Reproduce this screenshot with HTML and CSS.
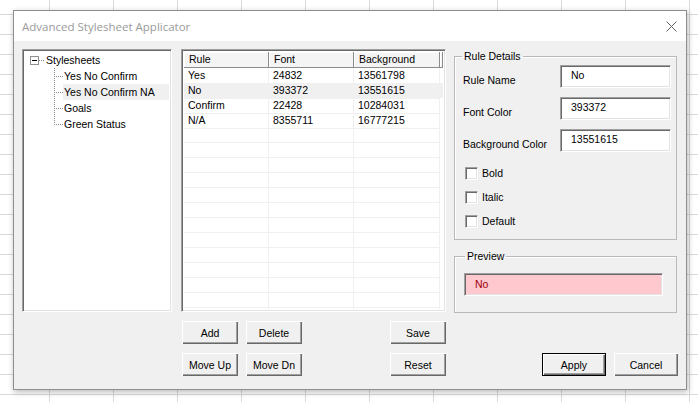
FILE: index.html
```html
<!DOCTYPE html>
<html>
<head>
<meta charset="utf-8">
<link rel="stylesheet" href="styles.css">
</head>
<body>
<div class="dialog">
  <div class="titlebar">
    <span class="title">Advanced Stylesheet Applicator</span>
    <svg class="close" width="11" height="11" viewBox="0 0 11 11"><path d="M0.5 0.5 L10.5 10.5 M10.5 0.5 L0.5 10.5" stroke="#5f5f5f" stroke-width="1" fill="none"/></svg>
  </div>
  <div class="body">
    <div class="tree sunken">
      <div class="node root"><span class="minus"><span class="bar"></span></span><span class="dots"></span><span class="txt">Stylesheets</span></div>
      <div class="node kid"><span class="txt">Yes No Confirm</span></div>
      <div class="node kid"><span class="txt sel">Yes No Confirm NA</span></div>
      <div class="node kid"><span class="txt">Goals</span></div>
      <div class="node kid last"><span class="txt">Green Status</span></div>
    </div>

    <div class="list sunken">
      <div class="lv-head">
        <div class="hc">Rule</div><div class="hc">Font</div><div class="hc">Background</div><div class="hc fill"></div>
      </div>
      <div class="lv-row"><div class="c">Yes</div><div class="c">24832</div><div class="c">13561798</div></div>
      <div class="lv-row hl"><div class="c">No</div><div class="c">393372</div><div class="c">13551615</div></div>
      <div class="lv-row"><div class="c">Confirm</div><div class="c">22428</div><div class="c">10284031</div></div>
      <div class="lv-row"><div class="c">N/A</div><div class="c">8355711</div><div class="c">16777215</div></div>
      <div class="lv-row"><div class="c"></div><div class="c"></div><div class="c"></div></div>
      <div class="lv-row"><div class="c"></div><div class="c"></div><div class="c"></div></div>
      <div class="lv-row"><div class="c"></div><div class="c"></div><div class="c"></div></div>
      <div class="lv-row"><div class="c"></div><div class="c"></div><div class="c"></div></div>
      <div class="lv-row"><div class="c"></div><div class="c"></div><div class="c"></div></div>
      <div class="lv-row"><div class="c"></div><div class="c"></div><div class="c"></div></div>
      <div class="lv-row"><div class="c"></div><div class="c"></div><div class="c"></div></div>
      <div class="lv-row"><div class="c"></div><div class="c"></div><div class="c"></div></div>
      <div class="lv-row"><div class="c"></div><div class="c"></div><div class="c"></div></div>
      <div class="lv-row"><div class="c"></div><div class="c"></div><div class="c"></div></div>
      <div class="lv-row"><div class="c"></div><div class="c"></div><div class="c"></div></div>
      <div class="lv-row"><div class="c"></div><div class="c"></div><div class="c"></div></div>
      <div class="lv-row"><div class="c"></div><div class="c"></div><div class="c"></div></div>
    </div>

    <div class="right">
      <fieldset class="group details">
        <legend class="legend-details">Rule Details</legend>
        <div class="details-inner">
          <div class="frow"><span class="flabel">Rule Name</span><div class="tbox sunken">No</div></div>
          <div class="frow"><span class="flabel">Font Color</span><div class="tbox sunken">393372</div></div>
          <div class="frow"><span class="flabel">Background Color</span><div class="tbox sunken">13551615</div></div>
          <div class="checks">
            <div class="crow"><span class="cbox sunken"></span><span>Bold</span></div>
            <div class="crow"><span class="cbox sunken"></span><span>Italic</span></div>
            <div class="crow"><span class="cbox sunken"></span><span>Default</span></div>
          </div>
        </div>
      </fieldset>
      <fieldset class="group preview">
        <legend class="legend-preview">Preview</legend>
        <div class="preview-inner">
          <div class="pbox sunken">No</div>
        </div>
      </fieldset>
    </div>

    <div class="spacer"></div>
    <div class="buttons">
      <div class="btn">Add</div>
      <div class="btn">Delete</div>
      <div class="gapcell"></div>
      <div class="btn">Save</div>
      <div class="btn">Move Up</div>
      <div class="btn">Move Dn</div>
      <div class="gapcell"></div>
      <div class="btn">Reset</div>
    </div>
    <div class="dlgbtns">
      <div class="btn wide default">Apply</div>
      <div class="btn wide">Cancel</div>
    </div>
  </div>
</div>
</body>
</html>
```

FILE: styles.css
```css
html, body {
  margin: 0;
  padding: 0;
}
body {
  width: 698px;
  height: 402px;
  overflow: hidden;
  box-sizing: border-box;
  padding: 10px 0 0 13px;
  background-color: #ffffff;
  background-image:
    linear-gradient(to right, #d9d9d9 0 1px, transparent 1px),
    linear-gradient(to bottom, #d9d9d9 0 1px, transparent 1px);
  background-size: 64px 20px;
  background-position: 49px 14px;
  font-family: "Liberation Sans", Arial, sans-serif;
  font-size: 10.5px;
  color: #000;
}

.dialog {
  width: 674px;
  height: 380px;
  box-sizing: border-box;
  border: 1px solid #8f8f8f;
  background: #f0f0f0;
  box-shadow: 1px 2px 6px rgba(0, 0, 0, 0.28);
  display: flex;
  flex-direction: column;
}

.titlebar {
  height: 30px;
  background: #ffffff;
  display: flex;
  align-items: center;
  justify-content: space-between;
  padding: 0 9px 0 8px;
  flex: none;
}
.title {
  font-family: "Open Sans", "Noto Sans", sans-serif;
  font-size: 11.5px;
  color: #9a9a9a;
}
.close {
  display: block;
}

.body {
  display: grid;
  grid-template-columns: 150px 266px 223px;
  grid-template-rows: 264px auto;
  column-gap: 8px;
  padding: 8px 0 0 8px;
}

.sunken {
  box-sizing: border-box;
  border: 1px solid;
  border-color: #a0a0a0 #ffffff #ffffff #a0a0a0;
  box-shadow: inset 1px 1px #696969, inset -1px -1px #e3e3e3;
  background: #ffffff;
}

/* tree */
.tree {
  height: 263px;
  padding: 2px 2px 0 2px;
  overflow: hidden;
}
.node {
  height: 16px;
  display: flex;
  align-items: center;
  line-height: 16px;
}
.root {
  padding-left: 5px;
}
.minus {
  width: 9px;
  height: 9px;
  box-sizing: border-box;
  border: 1px solid #919191;
  background: #fff;
  display: flex;
  align-items: center;
  justify-content: center;
  flex: none;
}
.minus .bar {
  width: 5px;
  height: 1px;
  background: #000;
}
.dots {
  width: 6px;
  height: 1px;
  background: repeating-linear-gradient(to right, #8a8a8a 0 1px, transparent 1px 2px);
  flex: none;
}
.root .txt {
  padding-left: 1px;
}
.kid {
  padding-left: 38px;
  background:
    repeating-linear-gradient(to bottom, #8a8a8a 0 1px, transparent 1px 2px) 29px 0 / 1px 100% no-repeat,
    repeating-linear-gradient(to right, #8a8a8a 0 1px, transparent 1px 2px) 31px 8px / 8px 1px no-repeat;
}
.kid.last {
  background-size: 1px 9px, 8px 1px;
}
.kid .txt {
  flex: 1;
  padding-left: 1px;
  white-space: nowrap;
}
.kid .txt.sel {
  background: #f0f0f0;
}

/* list view */
.list {
  height: 263px;
  margin-left: 1px;
  padding: 2px 2px 0 2px;
  overflow: hidden;
}
.lv-head {
  display: grid;
  grid-template-columns: 85px 85px 86px 1fr;
  height: 16px;
}
.hc {
  box-sizing: border-box;
  background: #f4f4f4;
  border-right: 1px solid #8c8c8c;
  border-bottom: 1px solid #8c8c8c;
  box-shadow: inset 1px 1px #ffffff;
  padding-left: 5px;
  line-height: 15px;
  white-space: nowrap;
}
.hc.fill {
  padding: 0;
}
.lv-row {
  display: grid;
  grid-template-columns: 85px 85px 86px;
  height: 15px;
}
.lv-row.hl {
  background: #f0f0f0;
}
.c {
  box-sizing: border-box;
  border-right: 1px solid #f0f0f0;
  border-bottom: 1px solid #f0f0f0;
  padding-left: 4px;
  line-height: 15px;
  white-space: nowrap;
}

/* right panel */
.right {
  display: flex;
  flex-direction: column;
}
.group {
  margin: 0;
  padding: 0;
  min-width: 0;
  border: 1px solid #b9b9b9;
  box-shadow: 1px 1px 0 #ffffff inset;
  box-sizing: border-box;
}
.group legend {
  padding: 0 2px;
  line-height: 13px;
  height: 13px;
}
.details {
  margin-top: 1px;
}
.legend-details {
  margin-left: 7px;
}
.legend-preview {
  margin-left: 10px;
}
.details-inner {
  padding: 2px 5px 11px 8px;
}
.frow {
  display: flex;
  height: 23px;
  margin-bottom: 9px;
}
.flabel {
  width: 97px;
  padding-top: 9px;
  line-height: 13px;
  white-space: nowrap;
}
.tbox {
  width: 111px;
  height: 23px;
  padding: 3px 0 0 10px;
  line-height: 13px;
}
.checks {
  padding-top: 6px;
  display: flex;
  flex-direction: column;
  gap: 11px;
  padding-left: 2px;
}
.crow {
  display: flex;
  align-items: center;
  height: 13px;
  line-height: 13px;
}
.cbox {
  width: 13px;
  height: 13px;
  margin-right: 4px;
  flex: none;
}
.preview {
  margin-top: 10px;
}
.preview-inner {
  padding: 10px 0 16px 9px;
}
.pbox {
  width: 199px;
  height: 23px;
  background: #ffc7ce;
  color: #9c0006;
  padding: 0 0 0 10px;
  line-height: 20px;
}

/* buttons */
.spacer {
  grid-column: 1;
}
.buttons {
  grid-column: 2;
  margin-top: 8px;
  margin-left: 2px;
  display: grid;
  grid-template-columns: 56px 56px 1fr 56px;
  grid-template-rows: 23px 23px;
  column-gap: 8px;
  row-gap: 9px;
}
.btn {
  box-sizing: border-box;
  height: 23px;
  background: #f0f0f0;
  box-shadow: inset 1px 1px #ffffff, inset -1px -1px #696969, inset -2px -2px #a0a0a0;
  display: flex;
  align-items: center;
  justify-content: center;
  white-space: nowrap;
}
.dlgbtns {
  grid-column: 3;
  margin-top: 40px;
  margin-right: -1px;
  display: flex;
  justify-content: flex-end;
  gap: 8px;
}
.btn.wide {
  width: 64px;
}
.btn.default {
  border: 1px solid #000;
}
```
